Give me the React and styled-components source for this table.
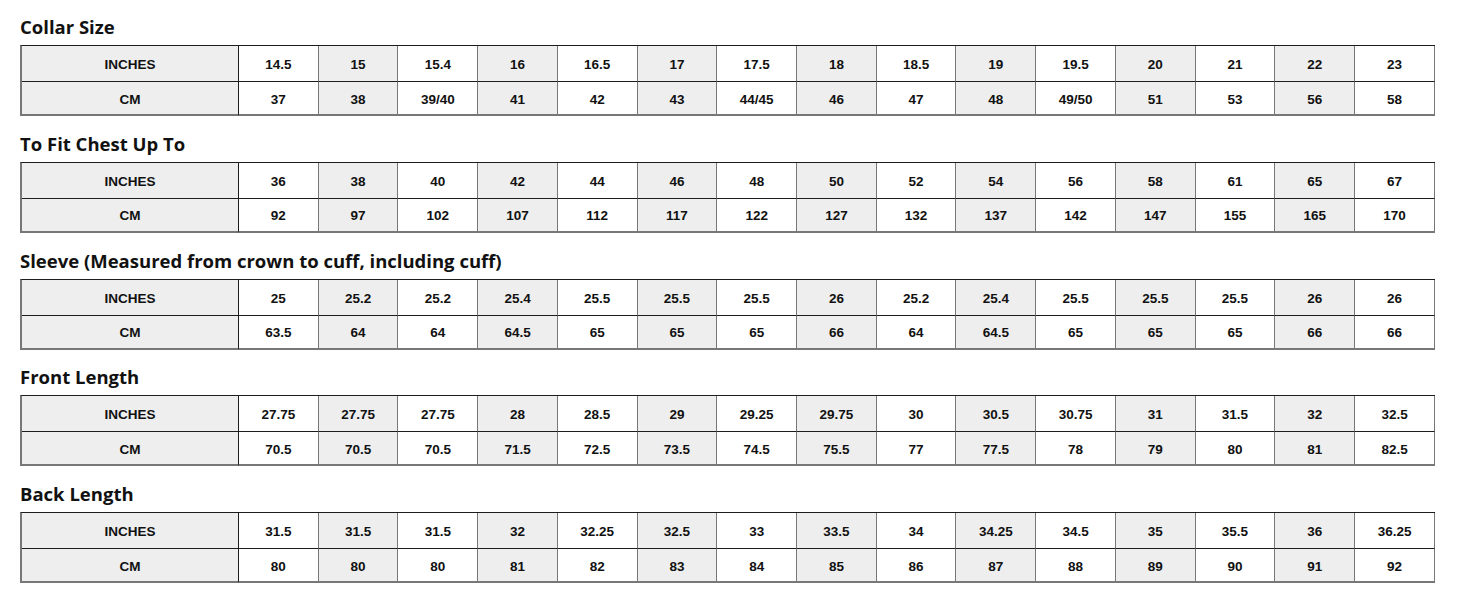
import React from "react";
import styled, { createGlobalStyle } from "styled-components";

const SECTIONS = [
  {
    title: "Collar Size",
    inches: ["14.5", "15", "15.4", "16", "16.5", "17", "17.5", "18", "18.5", "19", "19.5", "20", "21", "22", "23"],
    cm: ["37", "38", "39/40", "41", "42", "43", "44/45", "46", "47", "48", "49/50", "51", "53", "56", "58"],
  },
  {
    title: "To Fit Chest Up To",
    inches: ["36", "38", "40", "42", "44", "46", "48", "50", "52", "54", "56", "58", "61", "65", "67"],
    cm: ["92", "97", "102", "107", "112", "117", "122", "127", "132", "137", "142", "147", "155", "165", "170"],
  },
  {
    title: "Sleeve (Measured from crown to cuff, including cuff)",
    inches: ["25", "25.2", "25.2", "25.4", "25.5", "25.5", "25.5", "26", "25.2", "25.4", "25.5", "25.5", "25.5", "26", "26"],
    cm: ["63.5", "64", "64", "64.5", "65", "65", "65", "66", "64", "64.5", "65", "65", "65", "66", "66"],
  },
  {
    title: "Front Length",
    inches: ["27.75", "27.75", "27.75", "28", "28.5", "29", "29.25", "29.75", "30", "30.5", "30.75", "31", "31.5", "32", "32.5"],
    cm: ["70.5", "70.5", "70.5", "71.5", "72.5", "73.5", "74.5", "75.5", "77", "77.5", "78", "79", "80", "81", "82.5"],
  },
  {
    title: "Back Length",
    inches: ["31.5", "31.5", "31.5", "32", "32.25", "32.5", "33", "33.5", "34", "34.25", "34.5", "35", "35.5", "36", "36.25"],
    cm: ["80", "80", "80", "81", "82", "83", "84", "85", "86", "87", "88", "89", "90", "91", "92"],
  },
];

const SHADE = "#eeeeee";
const INK = "#1c1c1c";
const SOFT_LINE = "#777777";

const GlobalStyle = createGlobalStyle`
  html, body {
    margin: 0;
    padding: 0;
    background: #ffffff;
  }
`;

const Page = styled.main`
  display: flex;
  flex-direction: column;
  gap: 16.75px;
  padding: 16px 0 0 20px;
  width: 1415px;
`;

const Section = styled.section`
  display: flex;
  flex-direction: column;
  gap: 7px;
`;

const Title = styled.h2`
  margin: 0;
  font-family: "Open Sans", "Noto Sans", sans-serif;
  font-weight: 700;
  font-size: 18.5px;
  line-height: 22px;
  color: #111111;
`;

const Table = styled.table`
  width: 1415px;
  table-layout: fixed;
  border-collapse: separate;
  border-spacing: 0;
  border-top: 1px solid ${INK};
  border-left: 2px solid ${SOFT_LINE};
`;

const LabelCol = styled.col`
  width: 217px;
`;

const Cell = styled.td`
  box-sizing: border-box;
  padding: 2px 0 0;
  height: ${({ $first }) => ($first ? "36px" : "34px")};
  text-align: center;
  vertical-align: middle;
  font-family: "Liberation Sans", Arial, sans-serif;
  font-weight: 700;
  font-size: 13.5px;
  color: #111111;
  background: ${({ $shaded }) => ($shaded ? SHADE : "#ffffff")};
  border-right: 1px solid ${({ $softRight }) => ($softRight ? SOFT_LINE : INK)};
  border-bottom: ${({ $first }) => ($first ? `1px solid ${INK}` : `2px solid ${SOFT_LINE}`)};
`;

const SizeRow = ({ label, values, first }) => (
  <tr>
    <Cell $first={first} $shaded>
      {label}
    </Cell>
    {values.map((v, i) => {
      const shaded = i % 2 === 1;
      const nextShaded = (i + 1) % 2 === 1 && i + 1 < values.length;
      return (
        <Cell
          key={i}
          $first={first}
          $shaded={shaded}
          $softRight={shaded || nextShaded || i === values.length - 1}
        >
          {v}
        </Cell>
      );
    })}
  </tr>
);

const SizeTable = ({ section }) => (
  <Section>
    <Title>{section.title}</Title>
    <Table>
      <colgroup>
        <LabelCol />
        {section.inches.map((_, i) => (
          <col key={i} />
        ))}
      </colgroup>
      <tbody>
        <SizeRow label="INCHES" values={section.inches} first />
        <SizeRow label="CM" values={section.cm} />
      </tbody>
    </Table>
  </Section>
);

export default function App() {
  return (
    <>
      <GlobalStyle />
      <Page>
        {SECTIONS.map((s) => (
          <SizeTable key={s.title} section={s} />
        ))}
      </Page>
    </>
  );
}
